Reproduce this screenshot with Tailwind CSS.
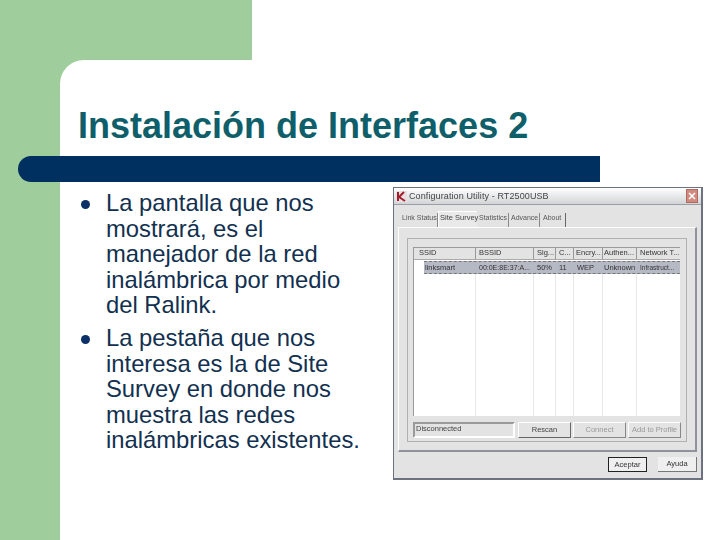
<!doctype html>
<html><head><meta charset="utf-8"><script src="https://cdn.jsdelivr.net/npm/@tailwindcss/browser@4"></script></head>
<body class="m-0">
<div class="relative w-[720px] h-[540px] overflow-hidden bg-white font-['Liberation_Sans',Arial,sans-serif]">
  <div class="w-[252px] h-[60px] bg-[#9fcd9c]"></div>
  <div class="flex h-[480px] bg-[#9fcd9c]">
    <div class="w-[60px] shrink-0"></div>
    <div class="flex-1 bg-white rounded-tl-[24px] flex flex-col">
      <h1 class="ml-[18px] mt-[46px] h-[50px] text-[36px] leading-[40px] font-bold text-[#0f5f6b] whitespace-nowrap">Instalación de Interfaces 2</h1>
      <div class="flex mt-[31px]">
        <ul class="ml-[20px] w-[284px] pt-[3px] shrink-0 text-[23.8px] leading-[25.6px] text-[#12304f]">
          <li class="flex"><span class="w-[26px] shrink-0 flex items-start pt-[10px]"><span class="block ml-[1px] w-[9px] h-[9px] rounded-full bg-[#0b2f66]"></span></span><span>La pantalla que nos mostrará, es el manejador de la red inalámbrica por medio del Ralink.</span></li>
          <li class="flex mt-[7px]"><span class="w-[26px] shrink-0 flex items-start pt-[10px]"><span class="block ml-[1px] w-[9px] h-[9px] rounded-full bg-[#0b2f66]"></span></span><span>La pestaña que nos interesa es la de Site Survey en donde nos muestra las redes inalámbricas existentes.</span></li>
        </ul>
        <div class="ml-[29px] w-[310px] h-[293px] shrink-0 border border-[#6d7280] border-r-2 border-b-2 bg-[#e3e3e3] flex flex-col text-[7.5px] leading-[10px] text-[#333] font-['Liberation_Sans',sans-serif] blur-[0.4px]">
          <div class="h-[17px] shrink-0 bg-gradient-to-b from-white to-[#d2d4d6] border-b border-[#9a9ea6] flex items-center pl-[2px] pr-[3px]">
            <svg class="w-[11px] h-[11px] shrink-0" viewBox="0 0 11 11"><rect width="11" height="11" fill="#eadfe0"/><path d="M2 1v9M3 6l5-5M3 6l6 4" stroke="#a02030" stroke-width="2" fill="none"/></svg>
            <span class="ml-[2px] text-[9px] tracking-[0.1px] text-[#444] whitespace-nowrap">Configuration Utility - RT2500USB</span>
            <span class="ml-auto w-[12px] h-[14px] bg-[#d08a80] border border-[#b06a60] flex items-center justify-center"><svg class="w-[8px] h-[8px]" viewBox="0 0 8 8"><path d="M1 1l6 6M7 1L1 7" stroke="#fff" stroke-width="1.5"/></svg></span>
          </div>
          <div class="flex items-end h-[22px] shrink-0 pl-[6px] text-[#555] whitespace-nowrap text-[7px]">
            <span class="w-[38px] h-[14px] border-r border-[#888] pl-[2px]">Link Status</span>
            <span class="w-[39px] h-[16px] bg-[#e9e9e9] border-t border-l border-white pl-[1px] pt-[1px] text-[#444] text-[7.5px]">Site Survey</span>
            <span class="w-[32px] h-[14px] border-r border-[#888] pl-[2px]">Statistics</span>
            <span class="w-[31px] h-[14px] border-r border-[#888] pl-[2px]">Advance</span>
            <span class="w-[26px] h-[14px] border-r border-[#666] pl-[3px]">About</span>
          </div>
          <div class="ml-[4px] w-[299px] h-[225px] shrink-0 border-t border-l border-white border-r-2 border-b-2 border-r-[#8f929a] border-b-[#8f929a] pt-[10px] pl-[8px]">
            <div class="w-[280px] h-[204px] border border-[#b0b0b0] pt-[8px] pl-[5px] flex flex-col">
              <div class="w-[267px] h-[169px] shrink-0 border-l border-t border-[#9a9a9a] bg-white flex flex-col overflow-hidden">
                <div class="flex h-[12px] shrink-0 bg-[#e3e3e3] border-b border-[#aaa] items-center text-[#333] whitespace-nowrap">
                  <span class="w-[62px] h-full pl-[5px] border-r border-[#999]">SSID</span>
                  <span class="w-[58px] h-full pl-[3px] border-r border-[#999]">BSSID</span>
                  <span class="w-[22px] h-full pl-[3px] border-r border-[#999]">Sig...</span>
                  <span class="w-[18px] h-full pl-[3px] border-r border-[#999]">C...</span>
                  <span class="w-[29px] h-full pl-[2px] border-r border-[#999]">Encry...</span>
                  <span class="w-[34px] h-full pl-[1px] border-r border-[#999]">Authen...</span>
                  <span class="w-[42px] h-full pl-[3px]">Network T...</span>
                </div>
                <div class="flex h-[13px] mt-[1px] shrink-0 items-center text-[#333] whitespace-nowrap">
                  <span class="w-[10px] h-full"></span>
                  <span class="flex h-full flex-1 bg-[#b5b9c4] border-y border-dashed border-[#777] leading-[11px]">
                    <span class="w-[52px] pl-[1px]">linksmart</span>
                    <span class="w-[58px] pl-[3px] text-[7px]">00:0E:8E:37:A...</span>
                    <span class="w-[22px] pl-[3px]">50%</span>
                    <span class="w-[18px] pl-[3px]">11</span>
                    <span class="w-[29px] pl-[3px]">WEP</span>
                    <span class="w-[34px] pl-[1px]">Unknown</span>
                    <span class="w-[32px] pl-[3px] text-[6.5px]">Infrastruct...</span>
                  </span>
                </div>
                <div class="flex flex-1">
                  <span class="w-[62px] border-r border-[#e8e8e8]"></span>
                  <span class="w-[58px] border-r border-[#e8e8e8]"></span>
                  <span class="w-[22px] border-r border-[#e8e8e8]"></span>
                  <span class="w-[18px] border-r border-[#e8e8e8]"></span>
                  <span class="w-[29px] border-r border-[#e8e8e8]"></span>
                  <span class="w-[34px] border-r border-[#e8e8e8]"></span>
                </div>
              </div>
              <div class="flex mt-[6px] h-[16px]">
                <span class="w-[102px] border-2 border-[#9a9a9a] border-r-white border-b-white pl-[1px] text-[#444] leading-[9px]">Disconnected</span>
                <span class="ml-[3px] w-[53px] border border-t-white border-l-white border-r-[#666] border-b-[#666] text-center leading-[14px] text-[#444]">Rescan</span>
                <span class="ml-[2px] w-[53px] border border-t-white border-l-white border-r-[#888] border-b-[#888] text-center leading-[14px] text-[#999]">Connect</span>
                <span class="ml-[2px] w-[53px] border border-t-white border-l-white border-r-[#888] border-b-[#888] text-center leading-[14px] text-[#999] whitespace-nowrap">Add to Profile</span>
              </div>
            </div>
          </div>
          <div class="flex pl-[214px] mt-[5px]">
            <span class="w-[39px] h-[15px] border border-[#222] bg-[#efefef] text-center leading-[13px]">Aceptar</span>
            <span class="ml-[11px] w-[39px] h-[15px] border-r border-b border-[#777] bg-[#efefef] text-center leading-[14px]">Ayuda</span>
          </div>
        </div>
      </div>
    </div>
  </div>
  <div class="absolute left-[18px] top-[156px] w-[582px] h-[26px] bg-[#00305f] rounded-l-[13px]"></div>
</div>
</body></html>
